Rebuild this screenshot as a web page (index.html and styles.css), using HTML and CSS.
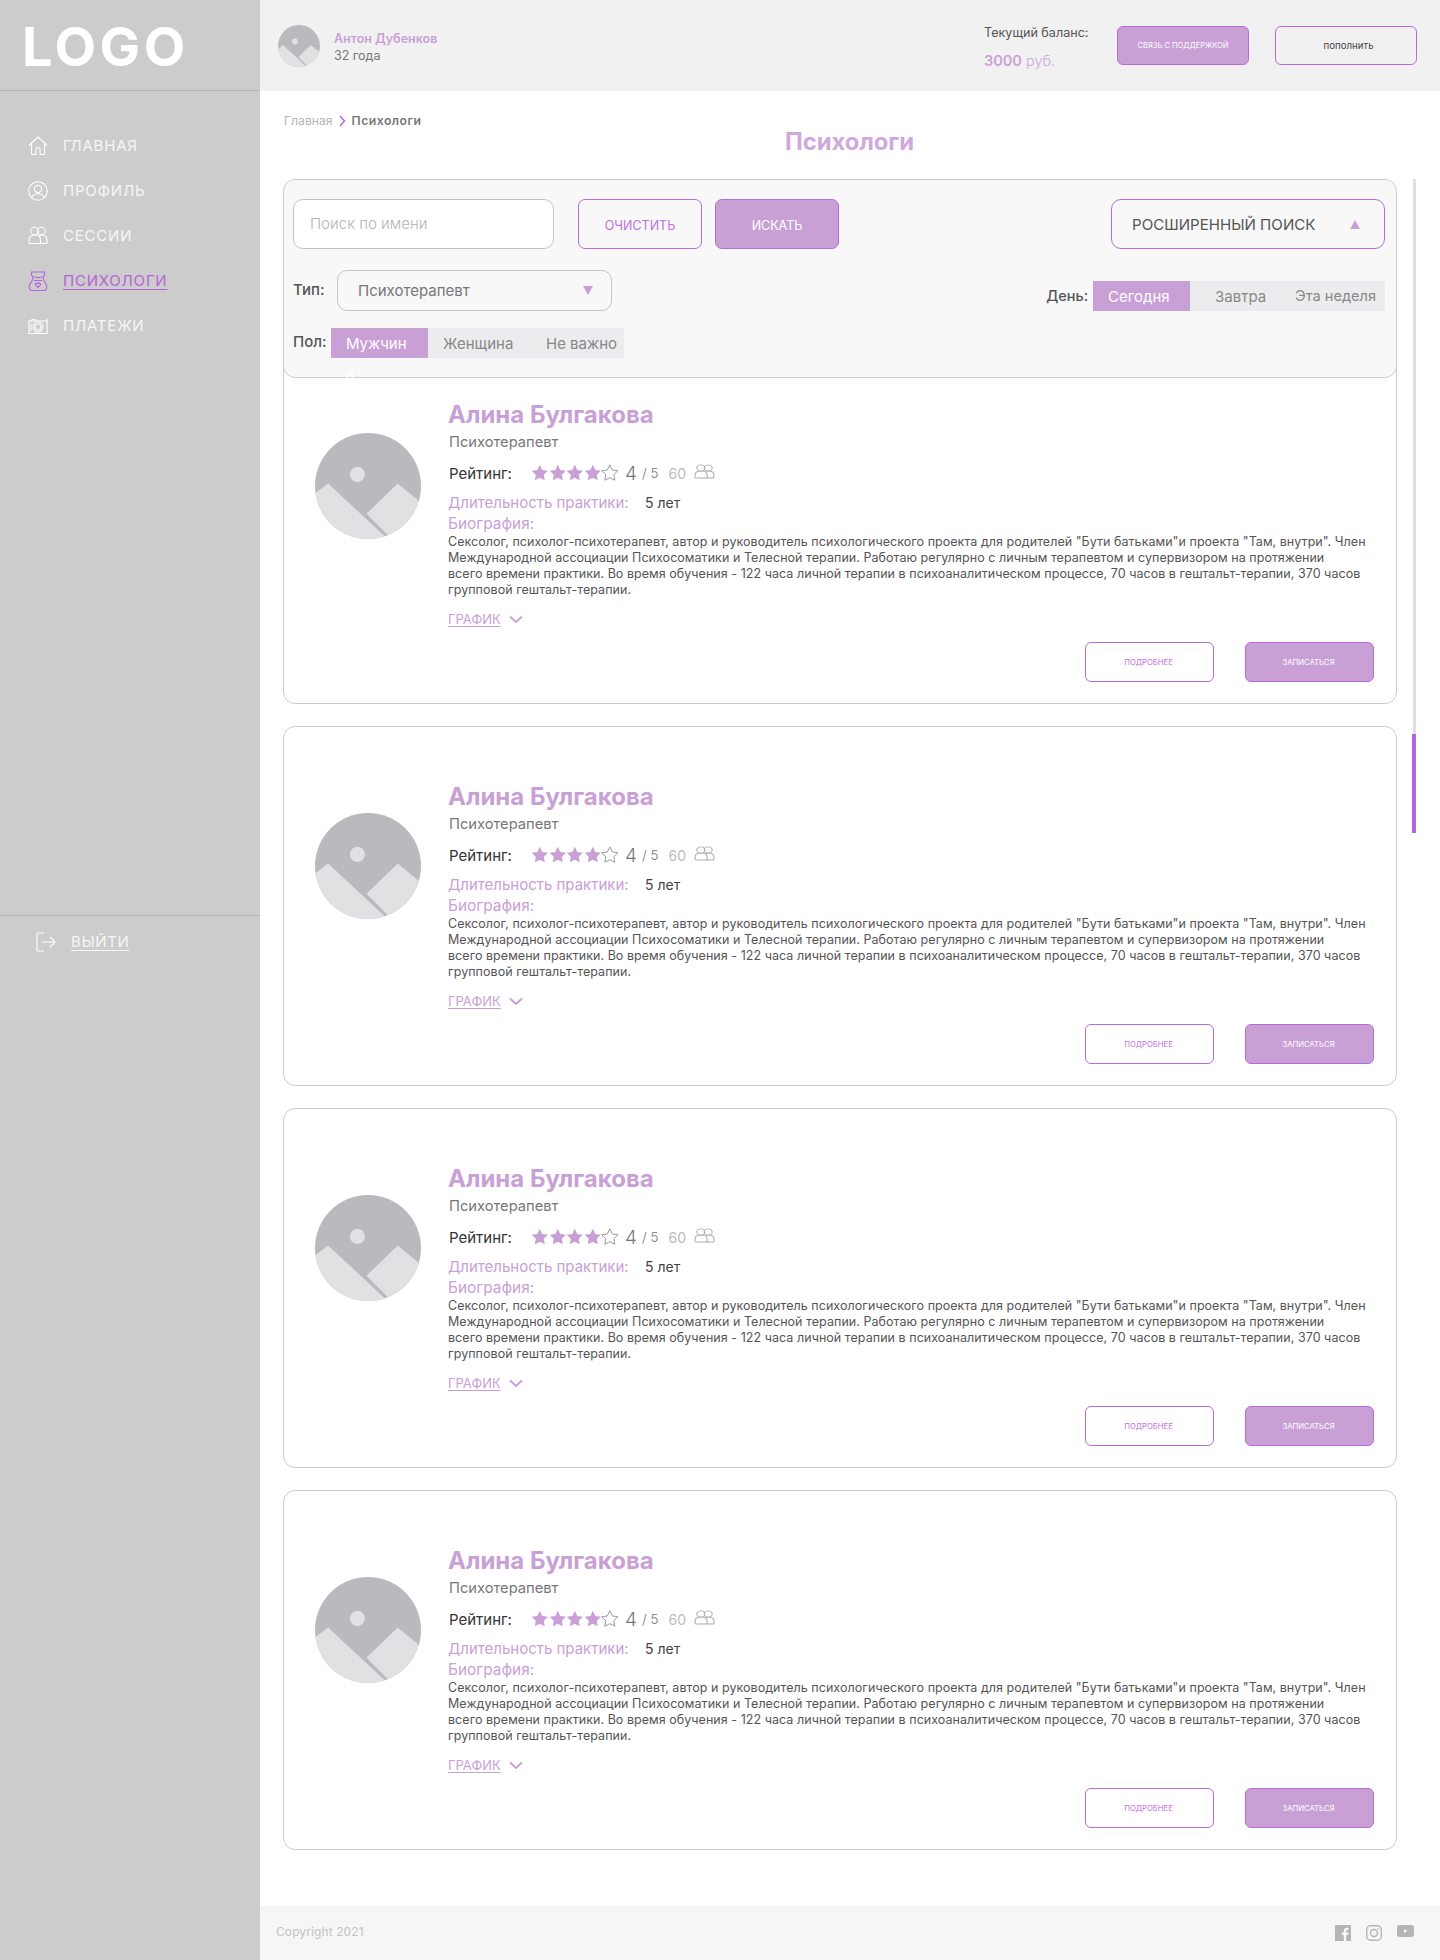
FILE: index.html

```html
<!DOCTYPE html>
<html lang="ru">
<head>
    <meta charset="UTF-8">
    <meta name="viewport" content="width=device-width, initial-scale=1.0">
    <title>Психологи</title>
    <link rel="stylesheet" href="styles.css">
</head>
<body>
    <svg class="defs" width="0" height="0">
        <symbol id="photo" viewBox="0 0 105 105">
            <circle cx="52.5" cy="52.5" r="52.5" fill="#b9b9be"/>
            <circle cx="42" cy="41" r="7.5" fill="#e1e1e4"/>
            <path d="M0 60L13 50L72 105H0Z" fill="#e1e1e4" clip-path="url(#photoClip)"/>
            <path d="M51 80L82 50L105 69V105H76Z" fill="#e1e1e4" clip-path="url(#photoClip)"/>
            <clipPath id="photoClip"><circle cx="52.5" cy="52.5" r="52.5"/></clipPath>
        </symbol>
        <symbol id="star" viewBox="0 0 18 18">
            <path d="M9 .8l2.5 5.3 5.8.8-4.2 4 1 5.7L9 14l-5.1 2.6 1-5.7-4.2-4 5.8-.8z"/>
        </symbol>
        <symbol id="people" viewBox="0 0 20 20" preserveAspectRatio="none">
            <circle cx="6.5" cy="5" r="3.8"/>
            <circle cx="13.5" cy="5" r="3.8"/>
            <path d="M1 17v-3c0-3 2-5 5-5h2c3 0 4.5 2 4.5 5v3.500H2c-.6 0-1-.5-1-.5z"/>
            <path d="M11 9h3c3 0 5 2 5 5v2.500c0 .5-.5 1-1 1h-5.500"/>
        </symbol>
    </svg>

    <div class="page">
        <aside class="sidebar">
            <div class="logo">LOGO</div>
            <nav class="nav">
                <a class="nav-item">
                    <svg class="nav-icon" viewBox="0 0 20 20"><path d="M.8 9.500L10 1l9.200 8.500M3.500 7.500v10c0 .6.400 1 1 1h2.500c.5 0 1-.4 1-1V13c0-1 .8-1.500 2-1.500s2 .5 2 1.500v4.500c0 .6.500 1 1 1h2.500c.6 0 1-.4 1-1v-10"/></svg>
                    <span>Главная</span>
                </a>
                <a class="nav-item">
                    <svg class="nav-icon" viewBox="0 0 20 20"><circle cx="10" cy="10" r="9.300"/><circle cx="10" cy="8" r="3.600"/><path d="M3.800 16.500c1-2.800 3-3.800 6.200-3.800s5.200 1 6.200 3.800"/></svg>
                    <span>Профиль</span>
                </a>
                <a class="nav-item">
                    <svg class="nav-icon" viewBox="0 0 20 20"><use href="#people"/></svg>
                    <span>Сессии</span>
                </a>
                <a class="nav-item active">
                    <svg class="nav-icon" viewBox="0 0 20 20"><path d="M3.500 1h13v3.500l-1.500 1.500 .5 3 3 5c.8 2.500-.3 5.500-2.500 5.500H4c-2.200 0-3.300-3-2.500-5.500l3-5 .5-3-1.500-1.500z"/><path d="M6 5.500c1 1.500 7 1.500 8 0M6 9.500h8"/><path d="M10 16.500l-2.500-2.500c-1-1.500 1.500-3 2.500-1.200 1-1.800 3.500-.3 2.500 1.200z"/></svg>
                    <span>Психологи</span>
                </a>
                <a class="nav-item">
                    <svg class="nav-icon" viewBox="0 0 20 20"><path d="M1 5h18v12.500H1zM3 5l1-1.500h3L8 5M19 2.500v2.500"/><circle cx="10" cy="11" r="5"/><circle cx="10" cy="11" r="3"/><path d="M3 8v7"/></svg>
                    <span>Платежи</span>
                </a>
            </nav>
            <div class="logout">
                <a class="logout-link">
                    <svg class="nav-icon" viewBox="0 0 20 20"><path d="M8 1H2c-.6 0-1 .4-1 1v16c0 .6.400 1 1 1h6M6 10h13M14 5l5 5-5 5"/></svg>
                    <span>Выйти</span>
                </a>
            </div>
        </aside>

        <div class="main">
            <header class="topbar">
                <svg class="user-photo"><use href="#photo"/></svg>
                <div class="user-info">
                    <div class="user-name">Антон Дубенков</div>
                    <div class="user-age">32 года</div>
                </div>
                <div class="balance">
                    <div class="balance-label">Текущий баланс:</div>
                    <div class="balance-value"><b>3000</b> руб.</div>
                </div>
                <a class="btn btn-fill btn-support">связь с поддержкой</a>
                <a class="btn btn-line btn-topup">пополнить</a>
            </header>

            <div class="content">
                <div class="crumbs">
                    <span class="crumb-link">Главная</span>
                    <svg class="crumb-arrow" viewBox="0 0 7 12"><path d="M1 1l4.500 5L1 11"/></svg>
                    <span class="crumb-now">Психологи</span>
                </div>
                <h1 class="page-title">Психологи</h1>

                <section class="filter">
                    <div class="filter-left">
                        <div class="filter-search">
                            <input class="search-input" type="text" placeholder="Поиск по имени">
                            <a class="btn btn-line btn-big btn-clear">очистить</a>
                            <a class="btn btn-fill btn-big">искать</a>
                        </div>
                        <div class="filter-type">
                            <span class="filter-label">Тип:</span>
                            <div class="select">
                                <span>Психотерапевт</span>
                                <i class="caret-down"></i>
                            </div>
                        </div>
                        <div class="filter-gender">
                            <span class="filter-label">Пол:</span>
                            <div class="segments segments-gender">
                                <span class="segment on">Мужчин<br>а</span>
                                <span class="segment">Женщина</span>
                                <span class="segment">Не важно</span>
                            </div>
                        </div>
                    </div>
                    <div class="filter-right">
                        <a class="advanced">
                            <span>Росширенный поиск</span>
                            <i class="caret-up"></i>
                        </a>
                        <div class="filter-day">
                            <span class="filter-label">День:</span>
                            <div class="segments segments-day">
                                <span class="segment on">Сегодня</span>
                                <span class="segment">Завтра</span>
                                <span class="segment">Эта неделя</span>
                            </div>
                        </div>
                    </div>
                </section>

                <div class="cards">
                    <article class="card">
                        <svg class="card-photo"><use href="#photo"/></svg>
                        <div class="card-body">
                            <h2 class="card-name">Алина Булгакова</h2>
                            <div class="card-role">Психотерапевт</div>
                            <div class="card-rating">
                                <span class="rating-label">Рейтинг:</span>
                                <span class="stars">
                                    <svg class="star"><use href="#star"/></svg>
                                    <svg class="star"><use href="#star"/></svg>
                                    <svg class="star"><use href="#star"/></svg>
                                    <svg class="star"><use href="#star"/></svg>
                                    <svg class="star star-empty"><use href="#star"/></svg>
                                </span>
                                <span class="score">4</span>
                                <span class="score-max">/ 5</span>
                                <span class="votes">60</span>
                                <svg class="votes-icon" viewBox="0 0 20 20" preserveAspectRatio="none"><use href="#people"/></svg>
                            </div>
                            <div class="card-practice"><span class="practice-label">Длительность практики:</span><span class="practice-value">5 лет</span></div>
                            <div class="bio-label">Биография:</div>
                            <p class="bio">Сексолог, психолог-психотерапевт, автор и руководитель психологического проекта для родителей "Бути батьками"и проекта "Там, внутри". Член<br>Международной ассоциации Психосоматики и Телесной терапии. Работаю регулярно с личным терапевтом и супервизором на протяжении<br>всего времени практики. Во время обучения - 122 часа личной терапии в психоаналитическом процессе, 70 часов в гештальт-терапии, 370 часов<br>групповой гештальт-терапии.</p>
                            <a class="schedule"><span>График</span><svg class="schedule-arrow" viewBox="0 0 14 9"><path d="M1 1.500l6 5.500 6-5.500"/></svg></a>
                        </div>
                        <div class="card-actions">
                            <a class="btn btn-line btn-small">подробнее</a>
                            <a class="btn btn-fill btn-small">записаться</a>
                        </div>
                    </article>

                    <article class="card">
                        <svg class="card-photo"><use href="#photo"/></svg>
                        <div class="card-body">
                            <h2 class="card-name">Алина Булгакова</h2>
                            <div class="card-role">Психотерапевт</div>
                            <div class="card-rating">
                                <span class="rating-label">Рейтинг:</span>
                                <span class="stars">
                                    <svg class="star"><use href="#star"/></svg>
                                    <svg class="star"><use href="#star"/></svg>
                                    <svg class="star"><use href="#star"/></svg>
                                    <svg class="star"><use href="#star"/></svg>
                                    <svg class="star star-empty"><use href="#star"/></svg>
                                </span>
                                <span class="score">4</span>
                                <span class="score-max">/ 5</span>
                                <span class="votes">60</span>
                                <svg class="votes-icon" viewBox="0 0 20 20" preserveAspectRatio="none"><use href="#people"/></svg>
                            </div>
                            <div class="card-practice"><span class="practice-label">Длительность практики:</span><span class="practice-value">5 лет</span></div>
                            <div class="bio-label">Биография:</div>
                            <p class="bio">Сексолог, психолог-психотерапевт, автор и руководитель психологического проекта для родителей "Бути батьками"и проекта "Там, внутри". Член<br>Международной ассоциации Психосоматики и Телесной терапии. Работаю регулярно с личным терапевтом и супервизором на протяжении<br>всего времени практики. Во время обучения - 122 часа личной терапии в психоаналитическом процессе, 70 часов в гештальт-терапии, 370 часов<br>групповой гештальт-терапии.</p>
                            <a class="schedule"><span>График</span><svg class="schedule-arrow" viewBox="0 0 14 9"><path d="M1 1.500l6 5.500 6-5.500"/></svg></a>
                        </div>
                        <div class="card-actions">
                            <a class="btn btn-line btn-small">подробнее</a>
                            <a class="btn btn-fill btn-small">записаться</a>
                        </div>
                    </article>

                    <article class="card">
                        <svg class="card-photo"><use href="#photo"/></svg>
                        <div class="card-body">
                            <h2 class="card-name">Алина Булгакова</h2>
                            <div class="card-role">Психотерапевт</div>
                            <div class="card-rating">
                                <span class="rating-label">Рейтинг:</span>
                                <span class="stars">
                                    <svg class="star"><use href="#star"/></svg>
                                    <svg class="star"><use href="#star"/></svg>
                                    <svg class="star"><use href="#star"/></svg>
                                    <svg class="star"><use href="#star"/></svg>
                                    <svg class="star star-empty"><use href="#star"/></svg>
                                </span>
                                <span class="score">4</span>
                                <span class="score-max">/ 5</span>
                                <span class="votes">60</span>
                                <svg class="votes-icon" viewBox="0 0 20 20" preserveAspectRatio="none"><use href="#people"/></svg>
                            </div>
                            <div class="card-practice"><span class="practice-label">Длительность практики:</span><span class="practice-value">5 лет</span></div>
                            <div class="bio-label">Биография:</div>
                            <p class="bio">Сексолог, психолог-психотерапевт, автор и руководитель психологического проекта для родителей "Бути батьками"и проекта "Там, внутри". Член<br>Международной ассоциации Психосоматики и Телесной терапии. Работаю регулярно с личным терапевтом и супервизором на протяжении<br>всего времени практики. Во время обучения - 122 часа личной терапии в психоаналитическом процессе, 70 часов в гештальт-терапии, 370 часов<br>групповой гештальт-терапии.</p>
                            <a class="schedule"><span>График</span><svg class="schedule-arrow" viewBox="0 0 14 9"><path d="M1 1.500l6 5.500 6-5.500"/></svg></a>
                        </div>
                        <div class="card-actions">
                            <a class="btn btn-line btn-small">подробнее</a>
                            <a class="btn btn-fill btn-small">записаться</a>
                        </div>
                    </article>

                    <article class="card">
                        <svg class="card-photo"><use href="#photo"/></svg>
                        <div class="card-body">
                            <h2 class="card-name">Алина Булгакова</h2>
                            <div class="card-role">Психотерапевт</div>
                            <div class="card-rating">
                                <span class="rating-label">Рейтинг:</span>
                                <span class="stars">
                                    <svg class="star"><use href="#star"/></svg>
                                    <svg class="star"><use href="#star"/></svg>
                                    <svg class="star"><use href="#star"/></svg>
                                    <svg class="star"><use href="#star"/></svg>
                                    <svg class="star star-empty"><use href="#star"/></svg>
                                </span>
                                <span class="score">4</span>
                                <span class="score-max">/ 5</span>
                                <span class="votes">60</span>
                                <svg class="votes-icon" viewBox="0 0 20 20" preserveAspectRatio="none"><use href="#people"/></svg>
                            </div>
                            <div class="card-practice"><span class="practice-label">Длительность практики:</span><span class="practice-value">5 лет</span></div>
                            <div class="bio-label">Биография:</div>
                            <p class="bio">Сексолог, психолог-психотерапевт, автор и руководитель психологического проекта для родителей "Бути батьками"и проекта "Там, внутри". Член<br>Международной ассоциации Психосоматики и Телесной терапии. Работаю регулярно с личным терапевтом и супервизором на протяжении<br>всего времени практики. Во время обучения - 122 часа личной терапии в психоаналитическом процессе, 70 часов в гештальт-терапии, 370 часов<br>групповой гештальт-терапии.</p>
                            <a class="schedule"><span>График</span><svg class="schedule-arrow" viewBox="0 0 14 9"><path d="M1 1.500l6 5.500 6-5.500"/></svg></a>
                        </div>
                        <div class="card-actions">
                            <a class="btn btn-line btn-small">подробнее</a>
                            <a class="btn btn-fill btn-small">записаться</a>
                        </div>
                    </article>
                </div>

                <div class="scroll-track"><div class="scroll-thumb"></div></div>
            </div>

            <footer class="footer">
                <span class="copyright">Copyright 2021</span>
                <div class="social">
                    <svg class="social-icon" viewBox="0 0 16 16"><path class="social-fill" fill-rule="evenodd" d="M0 0h16v16h-4.800v-6h2l.3-2.400h-2.300V6.200c0-.7.200-1.200 1.200-1.200h1.200V2.900c-.2 0-1-.1-1.800-.1-1.800 0-3 1.100-3 3.100v1.700h-2V10h2v6H0z"/></svg>
                    <svg class="social-icon" viewBox="0 0 16 16"><rect class="social-line" x=".7" y=".7" width="14.600" height="14.600" rx="4"/><circle class="social-line" cx="8" cy="8" r="3.500"/><circle class="social-fill" cx="12.200" cy="3.800" r=".8"/></svg>
                    <svg class="social-icon social-video" viewBox="0 0 17 12"><path class="social-fill" fill-rule="evenodd" d="M2.500 0h12C16 0 17 1 17 2.500v7c0 1.500-1 2.500-2.500 2.500h-12C1 12 0 11 0 9.500v-7C0 1 1 0 2.500 0zM7 4v4l3.500-2z"/></svg>
                </div>
            </footer>
        </div>
    </div>
</body>
</html>
```

FILE: styles.css

```css
body {
    font-family: Inter, "Noto Sans", sans-serif;
    margin: 0;
    padding: 0;
    background-color: #fff;
    color: #555;
}
a {
    cursor: pointer;
}
.defs {
    position: absolute;
}
.page {
    display: flex;
    min-height: 1960px;
}

/* sidebar */
.sidebar {
    width: 260px;
    flex-shrink: 0;
    background-color: #ccc;
}
.logo {
    height: 90px;
    padding-left: 22px;
    border-bottom: 1px solid #b5b5b5;
    color: #fff;
    font-size: 54px;
    font-weight: 700;
    line-height: 93px;
    letter-spacing: 3.5px;
}
.nav {
    padding: 32px 0 0 28px;
}
.nav-item {
    display: flex;
    align-items: center;
    height: 45px;
    gap: 15px;
    color: #f6f6f6;
    font-size: 15px;
    letter-spacing: 0.8px;
    text-transform: uppercase;
}
.nav-icon {
    width: 20px;
    height: 20px;
    fill: none;
    stroke: #fff;
    stroke-width: 1.1;
}
.nav-item.active {
    color: #b565d9;
}
.nav-item.active .nav-icon {
    stroke: #b565d9;
}
.nav-item.active span {
    text-decoration: underline;
    text-underline-offset: 3px;
}
.logout {
    margin-top: 567px;
    padding: 15px 0 0 36px;
    border-top: 1px solid #b5b5b5;
}
.logout-link {
    display: flex;
    align-items: center;
    gap: 15px;
    height: 21px;
    color: #f6f6f6;
    font-size: 15px;
    letter-spacing: 0.6px;
    text-transform: uppercase;
}
.logout-link span {
    text-decoration: underline;
    text-underline-offset: 3px;
}

/* top bar */
.main {
    flex: 1;
    display: flex;
    flex-direction: column;
    min-width: 0;
}
.topbar {
    display: flex;
    align-items: center;
    height: 91px;
    padding-left: 18px;
    background-color: #f1f1f1;
}
.user-photo {
    width: 42px;
    height: 42px;
}
.user-info {
    margin: 3px 0 0 14px;
    width: 650px;
    font-size: 12.5px;
    line-height: 17px;
}
.user-name {
    color: #c9a0d6;
    font-weight: 600;
}
.user-age {
    color: #777;
}
.balance {
    width: 133px;
    margin-top: 2px;
    font-size: 12.6px;
}
.balance-label {
    color: #555;
}
.balance-value {
    margin-top: 12px;
    color: #cdaadb;
    font-size: 14.5px;
    font-weight: 300;
}
.balance-value b {
    color: #c9a0d6;
    font-weight: 600;
}
.btn {
    display: flex;
    align-items: center;
    justify-content: center;
    box-sizing: border-box;
    border: 1px solid #b96bdc;
    border-radius: 6px;
    text-transform: uppercase;
}
.btn-fill {
    background-color: #c9a0d6;
    color: #fff;
}
.btn-line {
    color: #bf6fe0;
}
.btn-support {
    width: 132px;
    height: 39px;
    font-size: 7.5px;
}
.btn-topup {
    width: 142px;
    height: 39px;
    margin-left: 26px;
    padding-left: 5px;
    color: #444;
    font-size: 9.7px;
    text-transform: lowercase;
}

/* content */
.content {
    position: relative;
    padding: 22px 43px 0 23px;
}
.crumbs {
    display: flex;
    align-items: center;
    gap: 6px;
    height: 15px;
    padding-left: 1px;
    font-size: 12.2px;
}
.crumb-link {
    color: #b5b5b5;
}
.crumb-arrow {
    width: 7px;
    height: 12px;
    fill: none;
    stroke: #b565d9;
    stroke-width: 1.5;
}
.crumb-now {
    color: #777;
    font-weight: 600;
    letter-spacing: 0.5px;
}
.page-title {
    margin: 0;
    padding-left: 19px;
    height: 51px;
    color: #cfa8dc;
    font-size: 23.8px;
    font-weight: 700;
    line-height: 28px;
    text-align: center;
}

/* filter */
.filter {
    position: relative;
    z-index: 1;
    display: flex;
    justify-content: space-between;
    box-sizing: border-box;
    height: 199px;
    margin-bottom: -34px;
    padding: 19px 11px 0 9px;
    background-color: #f8f8f8;
    border: 1px solid #ccc;
    border-radius: 12px;
}
.filter-search {
    display: flex;
    height: 50px;
}
.search-input {
    box-sizing: border-box;
    width: 261px;
    height: 50px;
    padding: 0 16px 2px;
    border: 1px solid #c4c4c4;
    border-radius: 10px;
    background-color: #fff;
    font-family: inherit;
    font-size: 15px;
    font-weight: 300;
}
.search-input::placeholder {
    color: #b5b5b5;
}
.btn-big {
    width: 124px;
    height: 50px;
    padding-top: 2px;
    border-radius: 7px;
    font-size: 12.5px;
    margin-right: 13px;
}
.btn-clear {
    margin-left: 24px;
}
.filter-type {
    display: flex;
    align-items: center;
    height: 41px;
    margin-top: 21px;
}
.filter-label {
    color: #555;
    font-size: 15px;
    font-weight: 500;
    padding-bottom: 2px;
}
.filter-type .filter-label {
    width: 44px;
}
.select {
    display: flex;
    align-items: center;
    justify-content: space-between;
    box-sizing: border-box;
    width: 275px;
    height: 41px;
    padding: 0 18px 0 20px;
    border: 1px solid #c4c4c4;
    border-radius: 10px;
    color: #777;
    font-size: 15px;
}
.caret-down {
    width: 0;
    height: 0;
    border-left: 5px solid transparent;
    border-right: 5px solid transparent;
    border-top: 9px solid #c9a0d6;
}
.caret-up {
    width: 0;
    height: 0;
    border-left: 5px solid transparent;
    border-right: 5px solid transparent;
    border-bottom: 9px solid #c9a0d6;
}
.filter-gender {
    display: flex;
    align-items: flex-start;
    margin-top: 17px;
}
.filter-gender .filter-label {
    width: 38px;
    line-height: 28px;
}
.segments {
    display: flex;
    height: 30px;
    background-color: #ececef;
}
.segment {
    height: 30px;
    color: #888;
    font-size: 15px;
    line-height: 31px;
}
.segment.on {
    width: 82px;
    padding-left: 15px;
    background-color: #c9a0d6;
    color: #fff;
}
.segments-gender .segment:nth-child(2) {
    margin-left: 15px;
    width: 103px;
}
.segments-gender .segment:nth-child(3) {
    width: 78px;
}
.filter-right {
    display: flex;
    flex-direction: column;
    align-items: flex-end;
}
.advanced {
    display: flex;
    align-items: center;
    justify-content: space-between;
    box-sizing: border-box;
    width: 274px;
    height: 50px;
    padding: 0 24px 0 20px;
    border: 1px solid #b96bdc;
    border-radius: 10px;
    color: #555;
    font-size: 15.1px;
    text-transform: uppercase;
}
.filter-day {
    display: flex;
    align-items: center;
    gap: 5px;
    margin-top: 32px;
}
.filter-day .filter-label {
    font-size: 14.4px;
}
.segments-day .segment:nth-child(2) {
    margin-left: 25px;
    width: 80px;
}
.segments-day .segment:nth-child(3) {
    width: 90px;
    font-size: 14.6px;
}

/* cards */
.cards {
    display: flex;
    flex-direction: column;
    gap: 22px;
}
.card {
    position: relative;
    display: flex;
    box-sizing: border-box;
    height: 360px;
    padding: 57px 0 0 31px;
    border: 1px solid #ccc;
    border-radius: 12px;
}
.card-photo {
    width: 106px;
    height: 106px;
    margin-top: 29px;
    flex-shrink: 0;
}
.card:first-child .card-photo {
    margin-top: 31px;
}
.card-body {
    margin-left: 27px;
}
.card-name {
    margin: 0;
    color: #c9a0d6;
    font-size: 24px;
    font-weight: 700;
    line-height: 26px;
}
.card-role {
    margin-top: 5px;
    padding-left: 1px;
    color: #777;
    font-size: 14.7px;
    line-height: 18px;
}
.card-rating {
    display: flex;
    align-items: center;
    height: 24px;
    margin-top: 10px;
    padding-left: 1px;
}
.rating-label {
    width: 82px;
    color: #333;
    font-size: 15px;
}
.stars {
    display: flex;
    width: 94px;
}
.star {
    width: 17.6px;
    height: 17.6px;
    fill: #c9a0d6;
}
.star-empty {
    fill: none;
    stroke: #999;
    stroke-width: 1;
}
.score {
    color: #777;
    font-size: 19px;
    font-weight: 300;
}
.score-max {
    margin-left: 5px;
    color: #777;
    font-size: 13.5px;
    font-weight: 300;
}
.votes {
    margin-left: 10px;
    color: #bbb;
    font-size: 14px;
}
.votes-icon {
    width: 21px;
    height: 16px;
    margin: -3px 0 0 8px;
    fill: none;
    stroke: #aaa;
    stroke-width: 1;
}
.card-practice {
    margin-top: 8px;
    font-size: 15px;
    line-height: 20px;
}
.practice-label {
    display: inline-block;
    width: 197px;
    color: #c9a0d6;
}
.practice-value {
    color: #444;
    font-size: 14px;
}
.bio-label {
    margin-top: 1px;
    color: #c9a0d6;
    font-size: 15.4px;
    line-height: 20px;
}
.bio {
    margin: 0;
    color: #555;
    font-size: 12.5px;
    line-height: 16px;
    letter-spacing: 0.045px;
    white-space: nowrap;
}
.schedule {
    display: flex;
    align-items: center;
    gap: 8px;
    margin-top: 14px;
    color: #c9a0d6;
    font-size: 13px;
    line-height: 15px;
    text-transform: uppercase;
}
.schedule span {
    text-decoration: underline;
    text-underline-offset: 2px;
}
.schedule-arrow {
    width: 14px;
    height: 9px;
    fill: none;
    stroke: #c9a0d6;
    stroke-width: 2;
}
.card-actions {
    position: absolute;
    right: 22px;
    bottom: 21px;
    display: flex;
    gap: 31px;
}
.btn-small {
    width: 129px;
    height: 40px;
    padding-right: 2px;
    font-size: 7.7px;
}

/* scrollbar drawn over the page */
.scroll-track {
    position: absolute;
    top: 88px;
    left: 1153px;
    width: 3px;
    height: 654px;
    background-color: #e0e0e0;
}
.scroll-thumb {
    position: absolute;
    left: -1px;
    bottom: 0;
    width: 4px;
    height: 99px;
    background-color: #b565d9;
}

/* footer */
.footer {
    display: flex;
    align-items: center;
    justify-content: space-between;
    height: 54px;
    margin-top: auto;
    padding: 0 26px 0 16px;
    background-color: #f6f6f6;
}
.copyright {
    margin-top: -3px;
    color: #c4c4c4;
    font-size: 12px;
    letter-spacing: 0.1px;
}
.social {
    display: flex;
    align-items: center;
    gap: 15px;
    margin-top: -1px;
}
.social-icon {
    width: 16px;
    height: 16px;
}
.social-video {
    width: 17px;
    height: 12px;
    margin-top: -3px;
}
.social-fill {
    fill: #b5b5b5;
}
.social-line {
    fill: none;
    stroke: #b5b5b5;
    stroke-width: 1.4;
}
```
